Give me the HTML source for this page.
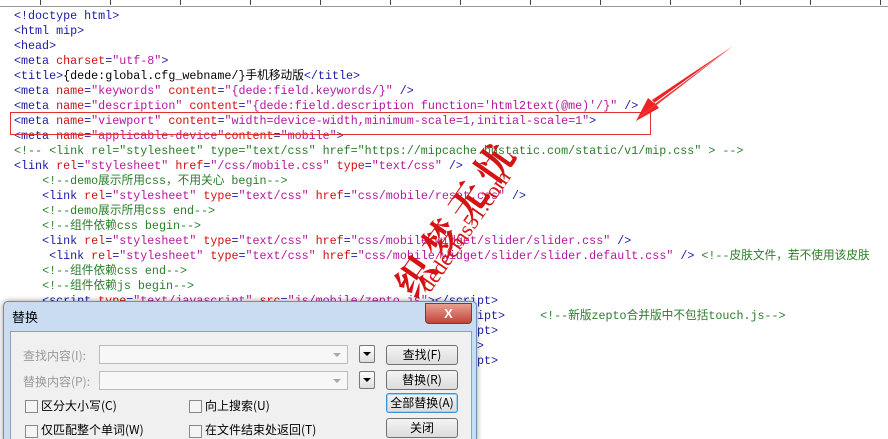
<!DOCTYPE html>
<html style="overflow:hidden"><head><meta charset="utf-8"><style>
html,body{overflow:hidden}
body{margin:0;width:888px;height:439px;overflow:hidden;background:#fff;position:relative;font-family:"Liberation Mono","Noto Sans CJK SC",monospace}
.ruler{position:absolute;left:0;top:0;width:888px;height:6px;background:#fff;border-bottom:1px solid #999}
.ruler i{position:absolute;top:0;width:1px;height:5px;background:#444}
pre{position:absolute;left:14px;top:9px;margin:0;font:11.7px/15px "Liberation Mono","Noto Sans CJK SC",monospace;color:#000}
.t{color:#1a1aa6}.a{color:#d01010}.v{color:#b5179e}.c{color:#2b7d2b}
.box{position:absolute;left:10px;top:112px;width:639px;height:21px;border:1px solid #d33}
.wm{position:absolute;color:#d41414;white-space:nowrap;text-align:center}
.dlg{position:absolute;left:3px;top:301px;width:472px;height:140px;overflow:hidden;background:#c9dcf2;border:1px solid #6f8fb5;border-radius:5px 5px 0 0;box-shadow:0 0 6px rgba(0,0,0,.4)}
.ttl{position:absolute;left:8px;top:5px;font:13px "Noto Sans CJK SC",sans-serif}
.x{position:absolute;left:421px;top:1px;width:45px;height:19px;border-radius:0 0 4px 4px;background:linear-gradient(#e8a090,#c0443a);border:1px solid #7a3b33;color:#fff;font:bold 13px/19px "Liberation Sans",sans-serif;text-align:center}
.pn{position:absolute;left:6px;top:29px;width:460px;height:120px;background:#f0f0f0;border:1px solid #8ba0bc}
.lb{position:absolute;font:12px "Noto Sans CJK SC",sans-serif;color:#999}
.bk{color:#000}
.cb{position:absolute;width:247px;height:17px;background:#f7f7f7;border:1px solid #bcbcbc}
.cb:after{content:"";position:absolute;right:6px;top:7px;border:4px solid transparent;border-top-color:#aaa}
.db{position:absolute;width:14px;height:16px;border:1px solid #777;background:linear-gradient(#fff,#ddd);border-radius:2px}
.db:after{content:"";position:absolute;left:3px;top:6px;border:4px solid transparent;border-top-color:#000}
.bt{position:absolute;width:70px;height:18px;border:1px solid #707070;border-radius:3px;background:linear-gradient(#f4f4f4,#dcdcdc);font:12px/18px "Noto Sans CJK SC",sans-serif;text-align:center}
.ck{position:absolute;width:11px;height:11px;border:1px solid #888;background:#f4f4f4}
</style></head><body>
<div class="ruler"><i style="left:40px"></i><i style="left:110px"></i><i style="left:180px"></i><i style="left:250px"></i><i style="left:320px"></i><i style="left:390px"></i><i style="left:460px"></i><i style="left:530px"></i><i style="left:600px"></i><i style="left:670px"></i><i style="left:740px"></i><i style="left:810px"></i><i style="left:880px"></i></div>
<pre><span class="t">&lt;!doctype html&gt;</span>
<span class="t">&lt;html mip&gt;</span>
<span class="t">&lt;head&gt;</span>
<span class="t">&lt;meta </span><span class="a">charset</span><span class="t">=</span><span class="v">"utf-8"</span><span class="t">&gt;</span>
<span class="t">&lt;title&gt;</span>{dede:global.cfg_webname/}手机移动版<span class="t">&lt;/title&gt;</span>
<span class="t">&lt;meta </span><span class="a">name</span><span class="t">=</span><span class="v">"keywords"</span> <span class="a">content</span><span class="t">=</span><span class="v">"{dede:field.keywords/}"</span><span class="t"> /&gt;</span>
<span class="t">&lt;meta </span><span class="a">name</span><span class="t">=</span><span class="v">"description"</span> <span class="a">content</span><span class="t">=</span><span class="v">"{dede:field.description function='html2text(@me)'/}"</span><span class="t"> /&gt;</span>
<span class="t">&lt;meta </span><span class="a">name</span><span class="t">=</span><span class="v">"viewport"</span> <span class="a">content</span><span class="t">=</span><span class="v">"width=device-width,minimum-scale=1,initial-scale=1"</span><span class="t">&gt;</span>
<span class="t">&lt;meta </span><span class="a">name</span><span class="t">=</span><span class="v">"applicable-device"</span><span class="a">content</span><span class="t">=</span><span class="v">"mobile"</span><span class="t">&gt;</span>
<span class="c">&lt;!-- &lt;link rel="stylesheet" type="text/css" href="https://mipcache.bdstatic.com/static/v1/mip.css" &gt; --&gt;</span>
<span class="t">&lt;link </span><span class="a">rel</span><span class="t">=</span><span class="v">"stylesheet"</span> <span class="a">href</span><span class="t">=</span><span class="v">"/css/mobile.css"</span> <span class="a">type</span><span class="t">=</span><span class="v">"text/css"</span><span class="t"> /&gt;</span>
    <span class="c">&lt;!--demo展示所用css，不用关心 begin--&gt;</span>
    <span class="t">&lt;link </span><span class="a">rel</span><span class="t">=</span><span class="v">"stylesheet"</span> <span class="a">type</span><span class="t">=</span><span class="v">"text/css"</span> <span class="a">href</span><span class="t">=</span><span class="v">"css/mobile/reset.css"</span><span class="t"> /&gt;</span>
    <span class="c">&lt;!--demo展示所用css end--&gt;</span>
    <span class="c">&lt;!--组件依赖css begin--&gt;</span>
    <span class="t">&lt;link </span><span class="a">rel</span><span class="t">=</span><span class="v">"stylesheet"</span> <span class="a">type</span><span class="t">=</span><span class="v">"text/css"</span> <span class="a">href</span><span class="t">=</span><span class="v">"css/mobile/widget/slider/slider.css"</span><span class="t"> /&gt;</span>
     <span class="t">&lt;link </span><span class="a">rel</span><span class="t">=</span><span class="v">"stylesheet"</span> <span class="a">type</span><span class="t">=</span><span class="v">"text/css"</span> <span class="a">href</span><span class="t">=</span><span class="v">"css/mobile/widget/slider/slider.default.css"</span><span class="t"> /&gt;</span> <span class="c">&lt;!--皮肤文件，若不使用该皮肤</span>
    <span class="c">&lt;!--组件依赖css end--&gt;</span>
    <span class="c">&lt;!--组件依赖js begin--&gt;</span>
    <span class="t">&lt;script </span><span class="a">type</span><span class="t">=</span><span class="v">"text/javascript"</span> <span class="a">src</span><span class="t">=</span><span class="v">"js/mobile/zepto.js"</span><span class="t">&gt;&lt;/script&gt;</span>
    <span class="t">&lt;script </span><span class="a">type</span><span class="t">=</span><span class="v">"text/javascript"</span> <span class="a">src</span><span class="t">=</span><span class="v">"js/mobile/extend.js"</span><span class="t">&gt;&lt;/script&gt;</span>     <span class="c">&lt;!--新版zepto合并版中不包括touch.js--&gt;</span>
    <span class="t">&lt;script </span><span class="a">type</span><span class="t">=</span><span class="v">"text/javascript"</span> <span class="a">src</span><span class="t">=</span><span class="v">"js/mobile/touch.js"</span><span class="t">&gt;&lt;/script&gt;</span>
    <span class="t">&lt;script </span><span class="a">type</span><span class="t">=</span><span class="v">"text/javascript"</span> <span class="a">src</span><span class="t">=</span><span class="v">"js/mobile/gmu.js"</span><span class="t">&gt;&lt;/script&gt;</span>
    <span class="t">&lt;script </span><span class="a">type</span><span class="t">=</span><span class="v">"text/javascript"</span> <span class="a">src</span><span class="t">=</span><span class="v">"js/mobile/event.js"</span><span class="t">&gt;&lt;/script&gt;</span></pre>
<div class="box"></div>
<svg style="position:absolute;left:0;top:0" width="888" height="439"><polygon points="733,46 652,100 659,108 636,121 648,98 654,103" fill="#e22"/><polygon points="733,46 640,115 636,121" fill="#e33"/></svg>
<div class="wm" style="width:220px;left:345px;top:188px;font:bold 38px 'Noto Serif CJK SC',serif;letter-spacing:8px;transform:rotate(-55deg)">织梦无忧</div>
<div class="wm" style="width:200px;left:365px;top:218px;font:22px 'Liberation Serif',serif;transform:rotate(-55deg)">dedecms51.com</div>
<div class="dlg">
<div class="ttl">替换</div><div class="x">X</div>
<div class="pn">
<div class="lb" style="left:12px;top:15px">查找内容(I):</div>
<div class="cb" style="left:88px;top:13px"></div><div class="db" style="left:348px;top:13px"></div>
<div class="bt" style="left:375px;top:13px">查找(F)</div>
<div class="lb" style="left:12px;top:41px">替换内容(P):</div>
<div class="cb" style="left:88px;top:39px"></div><div class="db" style="left:348px;top:39px"></div>
<div class="bt" style="left:375px;top:38px">替换(R)</div>
<div class="ck" style="left:14px;top:68px"></div><div class="lb bk" style="left:30px;top:65px">区分大小写(C)</div>
<div class="ck" style="left:178px;top:68px"></div><div class="lb bk" style="left:194px;top:65px">向上搜索(U)</div>
<div class="bt" style="left:375px;top:61px;border-color:#3c8fd8;box-shadow:inset 0 0 0 1px #9fd3f5">全部替换(A)</div>
<div class="ck" style="left:14px;top:93px"></div><div class="lb bk" style="left:30px;top:89px">仅匹配整个单词(W)</div>
<div class="ck" style="left:178px;top:93px"></div><div class="lb bk" style="left:194px;top:89px">在文件结束处返回(T)</div>
<div class="bt" style="left:375px;top:86px">关闭</div>
</div></div>
</body></html>
